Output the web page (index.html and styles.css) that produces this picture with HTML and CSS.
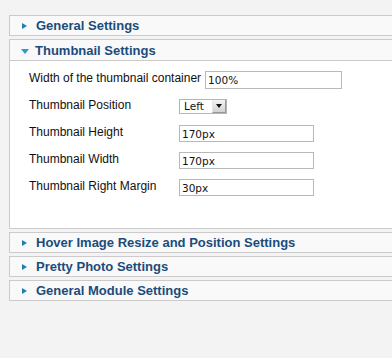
FILE: index.html
```html
<!DOCTYPE html>
<html lang="en">
<head>
  <meta charset="UTF-8">
  <title>Module parameters</title>
  <link rel="stylesheet" href="styles.css">
</head>
<body>

<div class="panele">

  <div class="panel">
    <div class="naglowek"><span class="strzalka"></span>General Settings</div>
  </div>

  <div class="panel otwarty">
    <div class="naglowek"><span class="strzalka w-dol"></span>Thumbnail Settings</div>
    <div class="tresc">
      <div class="wiersz pierwszy">
        <span class="etykieta">Width of the thumbnail container</span>
        <input class="pole szerokie" type="text" value="100%">
      </div>
      <div class="wiersz">
        <span class="etykieta">Thumbnail Position</span>
        <div class="lista"><span>Left</span><span class="przycisk"></span></div>
      </div>
      <div class="wiersz">
        <span class="etykieta">Thumbnail Height</span>
        <input class="pole" type="text" value="170px">
      </div>
      <div class="wiersz">
        <span class="etykieta">Thumbnail Width</span>
        <input class="pole" type="text" value="170px">
      </div>
      <div class="wiersz">
        <span class="etykieta">Thumbnail Right Margin</span>
        <input class="pole" type="text" value="30px">
      </div>
    </div>
  </div>

  <div class="panel">
    <div class="naglowek"><span class="strzalka"></span>Hover Image Resize and Position Settings</div>
  </div>

  <div class="panel">
    <div class="naglowek"><span class="strzalka"></span>Pretty Photo Settings</div>
  </div>

  <div class="panel">
    <div class="naglowek"><span class="strzalka"></span>General Module Settings</div>
  </div>

</div>

</body>
</html>
```

FILE: styles.css
```css
* {
  margin: 0;
  padding: 0;
  box-sizing: border-box;
}
body {
  background: #f3f3f3;
  font-family: "Liberation Sans", Arial, sans-serif;
  overflow: hidden;
  height: 100vh;
}
/* panele dochodza do prawej krawedzi, bez prawej ramki */
.panele {
  margin: 15px 0 0 9px;
  display: flex;
  flex-direction: column;
  gap: 3px;
}
.panel {
  border: 1px solid #cbcbcb;
  border-right: 0;
  background: #f9f9f9;
}
.naglowek {
  height: 19px;
  display: flex;
  align-items: center;
  padding-left: 11px;
  font-size: 13px;
  font-weight: bold;
  color: #1a4c7c;
}
.otwarty .naglowek {
  height: 21px;
  border-bottom: 1px solid #cbcbcb;
}
.strzalka {
  width: 0;
  height: 0;
  margin-left: 1px;
  margin-right: 9px;
  border-top: 3.5px solid transparent;
  border-bottom: 3.5px solid transparent;
  border-left: 5px solid #1f7fb3;
}
.strzalka.w-dol {
  margin-left: 0;
  margin-right: 6px;
  margin-top: 2px;
  border-left: 4.5px solid transparent;
  border-right: 4.5px solid transparent;
  border-top: 5px solid #2f97c9;
  border-bottom: 0;
}
.tresc {
  background: #fff;
  padding: 5px 0 27px 19px;
}
.wiersz {
  height: 27px;
  display: grid;
  grid-template-columns: 150px auto;
  align-items: center;
  font-size: 12px;
  color: #111;
}
.wiersz.pierwszy {
  display: flex;
  gap: 4px;
}
.etykieta {
  margin-top: -3px;
}
.pole {
  width: 135px;
  height: 17px;
  border: 1px solid #b8b8b8;
  background: #fff;
  font-family: "DejaVu Sans", sans-serif;
  font-size: 10.5px;
  color: #111;
  padding: 0 2px;
  outline: none;
}
.pole.szerokie {
  width: 137px;
  height: 18px;
}
.lista {
  width: 48px;
  height: 15px;
  border: 1px solid #b5b5b5;
  background: #fff;
  display: flex;
  justify-content: space-between;
  font-family: "DejaVu Sans", sans-serif;
  font-size: 10.5px;
  line-height: 13px;
  color: #111;
  padding-left: 4px;
}
.przycisk {
  width: 14px;
  background: linear-gradient(to bottom, #f4f4f4, #d2d2d2);
  border-left: 1px solid #e6e6e6;
  border-right: 1px solid #999;
  border-bottom: 1px solid #999;
  position: relative;
}
.przycisk::after {
  content: "";
  position: absolute;
  left: 3px;
  top: 4px;
  border-left: 3px solid transparent;
  border-right: 3px solid transparent;
  border-top: 4px solid #111;
}
```
